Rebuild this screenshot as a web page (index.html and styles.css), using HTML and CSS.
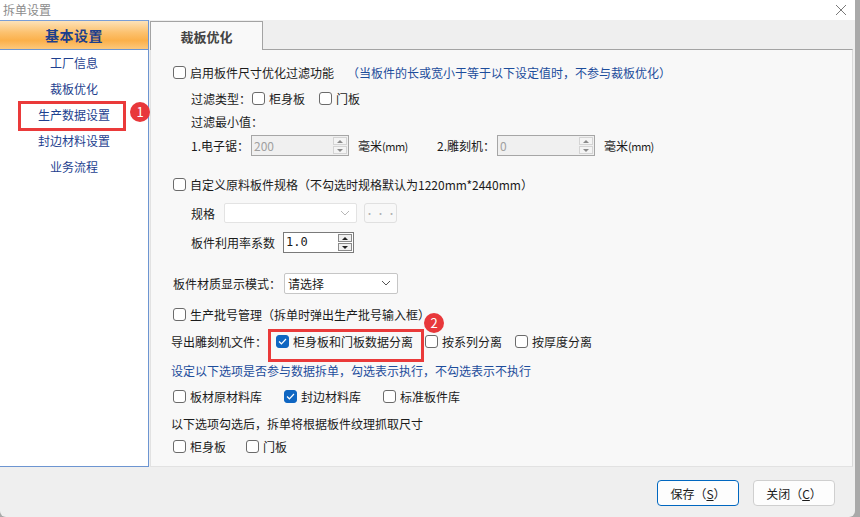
FILE: index.html
```html
<!DOCTYPE html>
<html lang="zh-CN">
<head>
<meta charset="utf-8">
<title>拆单设置</title>
<link rel="stylesheet" href="styles.css">
</head>
<body>
<div class="window">
  <div class="titlebar">
    <span class="title">拆单设置</span>
    <svg class="close" width="14" height="14" viewBox="0 0 14 14"><path d="M2 2 L12 12 M12 2 L2 12" stroke="#7a7a7a" stroke-width="1" fill="none"/></svg>
  </div>
  <div class="main">
    <div class="sidebar">
      <div class="side-head">基本设置</div>
      <ul class="side-list">
        <li>工厂信息</li>
        <li>裁板优化</li>
        <li class="marked">生产数据设置<span class="annot-box side-box"></span><span class="badge side-badge">1</span></li>
        <li>封边材料设置</li>
        <li>业务流程</li>
      </ul>
    </div>
    <div class="tabs-area">
      <div class="tabstrip"><div class="tab">裁板优化</div></div>
      <div class="panel">
        <div class="row">
          <label class="opt"><span class="cb"></span>启用板件尺寸优化过滤功能</label>
          <span class="hint hint-inline">（当板件的长或宽小于等于以下设定值时，不参与裁板优化）</span>
        </div>
        <div class="row indent mt4 gap14">
          <span>过滤类型：</span>
          <label class="opt"><span class="cb"></span>柜身板</label>
          <label class="opt"><span class="cb"></span>门板</label>
        </div>
        <div class="row indent mt1"><span>过滤最小值：</span></div>
        <div class="row indent mt2">
          <span class="lbl-num">1.电子锯：</span>
          <span class="num disabled"><span class="num-val">200</span><span class="spin"><span class="sp up"></span><span class="sp down"></span></span></span>
          <span class="unit">毫米<span class="mm">(mm)</span></span>
          <span class="lbl-num lbl-second">2.雕刻机：</span>
          <span class="num disabled"><span class="num-val">0</span><span class="spin"><span class="sp up"></span><span class="sp down"></span></span></span>
          <span class="unit">毫米<span class="mm">(mm)</span></span>
        </div>
        <div class="row mt17">
          <label class="opt"><span class="cb"></span>自定义原料板件规格（不勾选时规格默认为1220mm*2440mm）</label>
        </div>
        <div class="row indent mt7">
          <span class="lbl-spec">规格</span>
          <span class="combo combo-disabled"><span></span><svg width="10" height="6" viewBox="0 0 10 6"><path d="M1 1 L5 5 L9 1" stroke="#b8b8b8" fill="none"/></svg></span>
          <span class="dots">· · ·</span>
        </div>
        <div class="row indent mt7">
          <span class="lbl-rate">板件利用率系数</span>
          <span class="num active"><span class="num-val">1.0</span><span class="spin dark"><span class="sp up"></span><span class="sp down"></span></span></span>
        </div>
        <div class="row mt19">
          <span class="lbl-mode">板件材质显示模式：</span>
          <span class="combo select"><span>请选择</span><svg width="10" height="6" viewBox="0 0 10 6"><path d="M1 1 L5 5 L9 1" stroke="#555" fill="none"/></svg></span>
        </div>
        <div class="row mt9">
          <label class="opt"><span class="cb"></span>生产批号管理（拆单时弹出生产批号输入框）</label>
        </div>
        <div class="row mt5 export">
          <span class="lbl-export">导出雕刻机文件：</span>
          <span class="marked-opt">
            <label class="opt"><span class="cb checked"><svg width="9" height="7" viewBox="0 0 9 7"><path d="M1 3.5 L3.4 5.8 L8 1" stroke="#fff" stroke-width="1.2" fill="none"/></svg></span>柜身板和门板数据分离</label>
            <span class="annot-box export-box"></span>
            <span class="badge export-badge">2</span>
          </span>
          <label class="opt"><span class="cb"></span>按系列分离</label>
          <label class="opt opt-last"><span class="cb"></span>按厚度分离</label>
        </div>
        <div class="row mt7 flush"><span class="hint">设定以下选项是否参与数据拆单，勾选表示执行，不勾选表示不执行</span></div>
        <div class="row mt4 gap-lib">
          <label class="opt"><span class="cb"></span>板材原材料库</label>
          <label class="opt"><span class="cb checked"><svg width="9" height="7" viewBox="0 0 9 7"><path d="M1 3.5 L3.4 5.8 L8 1" stroke="#fff" stroke-width="1.2" fill="none"/></svg></span>封边材料库</label>
          <label class="opt"><span class="cb"></span>标准板件库</label>
        </div>
        <div class="row mt5 flush"><span>以下选项勾选后，拆单将根据板件纹理抓取尺寸</span></div>
        <div class="row mt1 gap20">
          <label class="opt"><span class="cb"></span>柜身板</label>
          <label class="opt"><span class="cb"></span>门板</label>
        </div>
      </div>
    </div>
  </div>
  <div class="footer">
    <button class="btn btn-default">保存（<u>S</u>）</button>
    <button class="btn">关闭（<u>C</u>）</button>
  </div>
</div>
</body>
</html>
```

FILE: styles.css
```css
* { box-sizing: border-box; }

body {
  margin: 0;
  background: #a9a9a9;
  font-family: "Noto Sans CJK SC", "Microsoft YaHei", sans-serif;
  font-size: 12px;
  color: #1b1b1b;
}

.window {
  width: 855px;
  height: 517px;
  background: #efefef;
  display: flex;
  flex-direction: column;
  border-radius: 0 0 6px 6px;
  overflow: hidden;
}

.titlebar {
  height: 20px;
  background: #fff;
  display: flex;
  align-items: center;
  justify-content: space-between;
  padding: 0 7px 0 3px;
}

.title {
  color: #8c8c8c;
  font-size: 12px;
  line-height: 16px;
}

.main {
  display: flex;
  height: 447px;
  gap: 1px;
}

.sidebar {
  width: 149px;
  background: #fff;
  border-right: 1px solid #6d95d1;
  border-bottom: 1px solid #6d95d1;
}

.side-head {
  height: 30px;
  border-top: 1px solid #7a9ed6;
  border-bottom: 1px solid #6d95d1;
  background: linear-gradient(#fde2b8 0%, #fcc270 40%, #fbb04a 70%, #fcc87c 100%);
  display: flex;
  align-items: center;
  justify-content: center;
  font-size: 14px;
  font-weight: bold;
  color: #1d3f8c;
  letter-spacing: 0.5px;
}

.side-list {
  list-style: none;
  margin: 0;
  padding: 0;
}

.side-list li {
  height: 26px;
  line-height: 26px;
  text-align: center;
  color: #1e3f8f;
  font-size: 12px;
  position: relative;
}

.annot-box {
  position: absolute;
  border: 3px solid #ea3a3a;
  pointer-events: none;
}

.side-box {
  left: 18px;
  top: -1px;
  width: 108px;
  height: 30px;
}

.badge {
  position: absolute;
  width: 20px;
  height: 20px;
  border-radius: 50%;
  background: #e8383b;
  color: #fff;
  font-size: 13px;
  font-weight: normal;
  line-height: 20px;
  text-align: center;
}

.side-badge {
  left: 130px;
  top: 0;
}

.tabs-area {
  width: 703px;
  display: flex;
  flex-direction: column;
}

.tabstrip {
  height: 29px;
  display: flex;
  align-items: flex-end;
}

.tab {
  width: 113px;
  height: 29px;
  margin-bottom: -1px;
  background: #f9f9f9;
  border: 1px solid #a3a3a3;
  border-bottom: none;
  display: flex;
  align-items: center;
  justify-content: center;
  font-size: 13px;
  font-weight: bold;
  color: #444;
  position: relative;
  z-index: 1;
}

.panel {
  flex: 1;
  background: #f8f8f8;
  border-top: 1px solid #a3a3a3;
  border-left: 1px solid #e2e2e2;
  border-right: 1px solid #dadada;
  border-bottom: 1px solid #e2e2e2;
  padding: 11px 0 0 22px;
}

.row {
  height: 22px;
  display: flex;
  align-items: center;
  white-space: nowrap;
}

.indent { padding-left: 18px; }
.flush { margin-left: -2px; }

.mt1 { margin-top: 1px; }
.mt2 { margin-top: 2px; }
.mt4 { margin-top: 4px; }
.mt5 { margin-top: 5px; }
.mt7 { margin-top: 7px; }
.mt9 { margin-top: 9px; }
.mt17 { margin-top: 17px; }
.mt19 { margin-top: 19px; }

.gap14 { gap: 1px; }
.gap14 .opt + .opt { margin-left: 13px; }
.gap-lib .opt + .opt { margin-left: 22px; }
.gap20 .opt + .opt { margin-left: 20px; }

.opt {
  display: inline-flex;
  align-items: center;
  gap: 4px;
}

.cb {
  width: 13px;
  height: 13px;
  border: 1px solid #6b6b6b;
  border-radius: 3px;
  background: #fff;
  display: inline-flex;
  align-items: center;
  justify-content: center;
}

.cb.checked {
  background: #0f66c2;
  border-color: #0f66c2;
}

.hint { color: #1d4d9c; }
.hint-inline { margin-left: 13px; }

.lbl-num { width: 60px; }
.lbl-second { margin-left: 32px; }

.num {
  height: 21px;
  display: inline-flex;
  align-items: stretch;
  border: 1px solid #a6a6a6;
  padding: 1px;
}

.num.disabled {
  width: 98px;
  background: #f0f0f0;
  color: #a0a0a0;
}

.num.active {
  width: 71px;
  background: #fff;
  border-color: #7a7a7a;
  font-family: "DejaVu Sans Mono", monospace;
  font-size: 12px;
}

.num-val {
  flex: 1;
  line-height: 17px;
  padding-left: 1px;
}

.spin {
  width: 14px;
  display: flex;
  flex-direction: column;
  gap: 1px;
}

.sp {
  flex: 1;
  border: 1px solid #d4d4d4;
  background: #f4f4f4;
  position: relative;
}

.sp::after {
  content: "";
  position: absolute;
  left: 3px;
  width: 0;
  height: 0;
  border-left: 3px solid transparent;
  border-right: 3px solid transparent;
}

.sp.up::after { top: 2px; border-bottom: 3px solid #8a8a8a; }
.sp.down::after { top: 2px; border-top: 3px solid #8a8a8a; }

.spin.dark .sp { border-color: #8a8a8a; background: #f0f0f0; }
.spin.dark .sp.up::after { border-bottom-color: #222; }
.spin.dark .sp.down::after { border-top-color: #222; }

.unit {
  margin-left: 9px;
  width: 47px;
}

.mm {
  font-size: 11px;
  letter-spacing: -0.5px;
}

.lbl-spec { width: 33px; }

.combo {
  display: inline-flex;
  align-items: center;
  justify-content: space-between;
  background: #fff;
  padding: 0 6px 0 3px;
}

.combo-disabled {
  width: 133px;
  height: 20px;
  border: 1px solid #e3e3e3;
  border-radius: 2px;
}

.dots {
  width: 33px;
  height: 20px;
  margin-left: 7px;
  border: 1px solid #e0e0e0;
  border-radius: 3px;
  background: #f8f8f8;
  color: #b0b0b0;
  font-size: 9px;
  display: inline-flex;
  align-items: center;
  justify-content: center;
}

.lbl-rate { width: 92px; }
.lbl-mode { width: 111px; }

.select {
  width: 114px;
  height: 21px;
  border: 1px solid #c6c6c6;
  border-radius: 2px;
}

.export { margin-left: -2px; }
.lbl-export { width: 97px; }

.marked-opt {
  position: relative;
  display: inline-flex;
  align-items: center;
  padding: 0 10px 0 8px;
}

.export-box {
  left: 0;
  top: -4px;
  width: 156px;
  height: 33px;
}

.export-badge {
  left: 156px;
  top: -20px;
}

.marked-opt + .opt { margin-left: 2px; }
.opt-last { margin-left: 13px; }

.footer {
  flex: 1;
  display: flex;
  justify-content: flex-end;
  align-items: flex-start;
  padding: 13px 20px 0 0;
  gap: 14px;
}

.btn {
  width: 82px;
  height: 26px;
  background: #fdfdfd;
  border: 1px solid #cfcfcf;
  border-radius: 4px;
  font-family: "Noto Sans CJK SC", sans-serif;
  font-size: 12px;
  color: #1b1b1b;
  padding: 0;
}

.btn-default {
  border-color: #0067c0;
}
```
